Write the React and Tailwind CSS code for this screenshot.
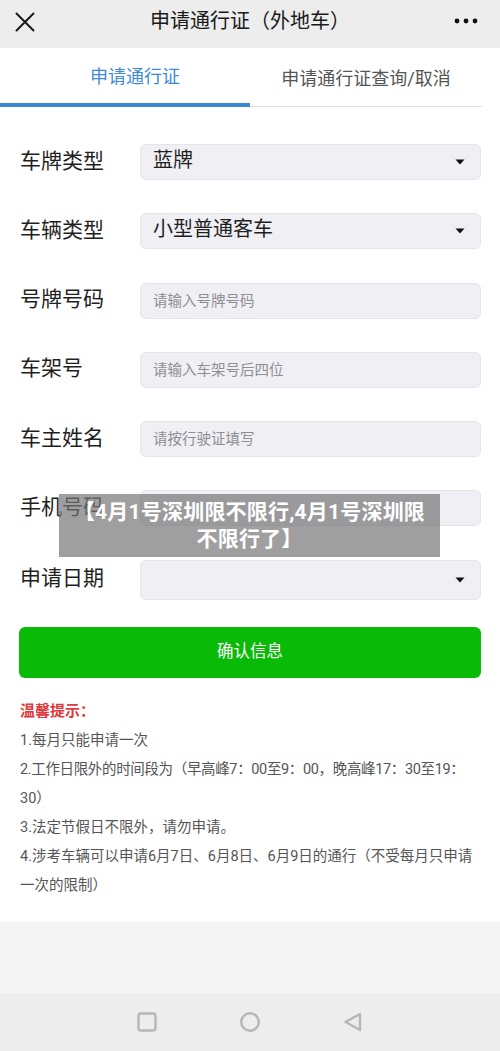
import React from "react";

function Caret() {
  return (
    <svg width="10" height="6" viewBox="0 0 10 6" className="shrink-0">
      <path d="M0.5 0.5 L9.5 0.5 L5 5.5 Z" fill="#111" />
    </svg>
  );
}

function Field({ label, value, placeholder, select, tall }) {
  return (
    <div className="flex items-center">
      <div className="w-[140px] shrink-0 pl-[20px] pb-[2px] text-[21px] text-[#1f1f1f] leading-none whitespace-nowrap">{label}</div>
      <div
        className={`flex-1 mr-[19px] ${tall ? "h-[40px]" : "h-[36px]"} bg-[#efeff4] border border-[#e4e4ea] rounded-[6px] flex items-center pl-[12px] pr-[15px]`}
      >
        <div className="flex-1 min-w-0">
          {value ? (
            <span className="text-[20px] text-[#1f1f1f] leading-none">{value}</span>
          ) : placeholder ? (
            <span className="text-[14.5px] text-[#8e8e93] leading-none">{placeholder}</span>
          ) : null}
        </div>
        {select && <Caret />}
      </div>
    </div>
  );
}

export default function App() {
  return (
    <div className="w-[500px] h-[1051px] flex flex-col bg-white font-['Roboto','Noto_Sans_CJK_SC',sans-serif] relative overflow-hidden">
      {/* header */}
      <div className="h-[48px] bg-[#ededed] flex items-center relative shrink-0">
        <div className="w-[50px] flex justify-center pb-[4px]">
          <svg width="20" height="20" viewBox="0 0 20 20">
            <path d="M1.5 1.5 L18.5 18.5 M18.5 1.5 L1.5 18.5" stroke="#1a1a1a" strokeWidth="2" strokeLinecap="round" />
          </svg>
        </div>
        <div className="flex-1 text-center text-[20px] text-[#1a1a1a] leading-none pb-[6px]">申请通行证（外地车）</div>
        <div className="w-[50px] flex justify-start pl-[4px] pb-[6px]">
          <svg width="26" height="6" viewBox="0 0 26 6">
            <circle cx="3" cy="3" r="2.4" fill="#111" />
            <circle cx="12" cy="3" r="2.4" fill="#111" />
            <circle cx="21" cy="3" r="2.4" fill="#111" />
          </svg>
        </div>
      </div>

      {/* tabs */}
      <div className="h-[59px] flex shrink-0">
        <div className="w-[250px] flex flex-col">
          <div className="flex-1 flex items-center justify-center pl-[20px] text-[18px] text-[#3d8bd8] leading-none pt-[3px]">申请通行证</div>
          <div className="h-[4px] bg-[#3a87d6]" />
        </div>
        <div className="w-[232px] flex flex-col">
          <div className="flex-1 flex items-center justify-center text-[18px] text-[#555] leading-none pt-[3px] whitespace-nowrap">申请通行证查询/取消</div>
          <div className="h-[1px] bg-[#e3e3e3]" />
        </div>
      </div>

      {/* form */}
      <div className="flex flex-col gap-[33.3px] pt-[37px]">
        <Field label="车牌类型" value="蓝牌" select />
        <Field label="车辆类型" value="小型普通客车" select />
        <Field label="号牌号码" placeholder="请输入号牌号码" />
        <Field label="车架号" placeholder="请输入车架号后四位" />
        <Field label="车主姓名" placeholder="请按行驶证填写" />
        <Field label="手机号码" />
        <Field label="申请日期" select tall />
      </div>

      <div className="px-[19px] pt-[27px]">
        <button className="w-full h-[51px] bg-[#09bb07] rounded-[6px] text-white text-[16.5px] leading-none flex items-center justify-center">
          确认信息
        </button>
      </div>

      {/* tips */}
      <div className="px-[20px] pt-[19px] pb-[22px] text-[14.5px] leading-[29px] text-[#555]">
        <div className="text-[#e0383c] font-bold text-[15px]">温馨提示：</div>
        <div className="whitespace-nowrap">1.每月只能申请一次</div>
        <div className="whitespace-nowrap tracking-[-0.35px]">2.工作日限外的时间段为（早高峰7：00至9：00，晚高峰17：30至19：</div>
        <div className="whitespace-nowrap">30）</div>
        <div className="whitespace-nowrap">3.法定节假日不限外，请勿申请。</div>
        <div className="whitespace-nowrap">4.涉考车辆可以申请6月7日、6月8日、6月9日的通行（不受每月只申请</div>
        <div className="whitespace-nowrap">一次的限制）</div>
      </div>

      <div className="flex-1 bg-[#f4f4f4]" />

      {/* nav bar */}
      <div className="h-[58px] bg-[#ededed] flex items-center justify-center gap-[82px] shrink-0">
        <svg width="20" height="20" viewBox="0 0 20 20">
          <rect x="1.5" y="1.5" width="17" height="17" rx="2.5" fill="none" stroke="#b7b7b7" strokeWidth="2.4" />
        </svg>
        <svg width="22" height="22" viewBox="0 0 22 22">
          <circle cx="11" cy="11" r="8.8" fill="none" stroke="#b7b7b7" strokeWidth="2.4" />
        </svg>
        <svg width="20" height="20" viewBox="0 0 20 20">
          <path d="M17 2 L17 18 L2.5 10 Z" fill="none" stroke="#b7b7b7" strokeWidth="2.4" strokeLinejoin="round" />
        </svg>
      </div>

      {/* overlay caption */}
      <div className="absolute left-[59px] top-[494px] w-[381px] h-[63px] bg-[rgba(118,118,118,0.7)] flex flex-col items-center justify-center text-white font-bold text-[21px] tracking-[0.2px] leading-[27px] text-center">
        <div className="whitespace-nowrap">【4月1号深圳限不限行,4月1号深圳限</div>
        <div className="whitespace-nowrap">不限行了】</div>
      </div>
    </div>
  );
}
